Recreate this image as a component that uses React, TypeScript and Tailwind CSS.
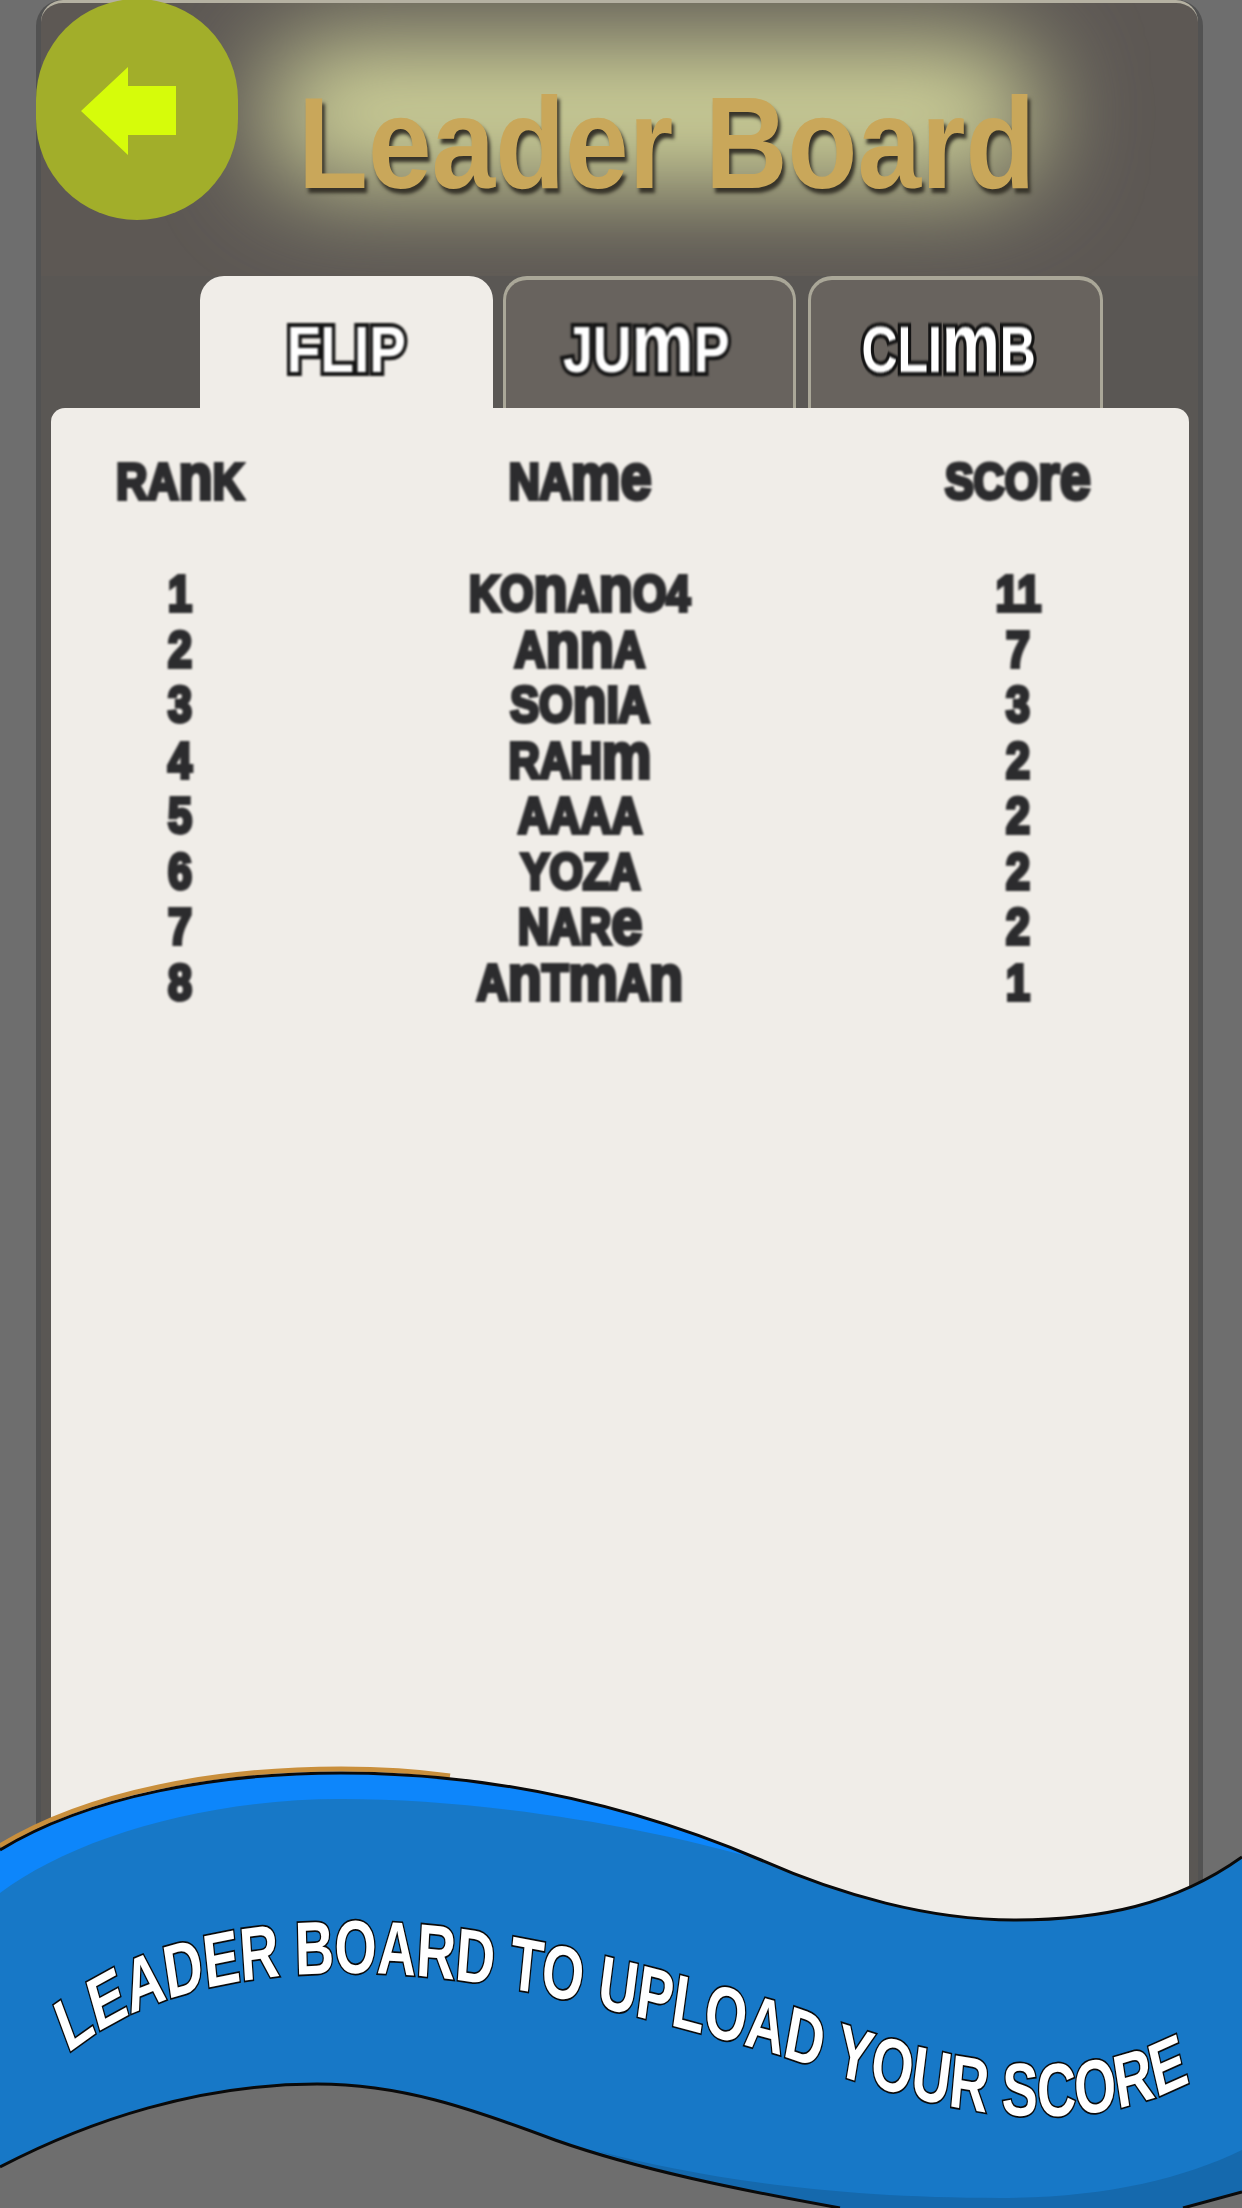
import React from "react";

const rows = [
  ["1", "KOnAnO4", "11"],
  ["2", "AnnA", "7"],
  ["3", "SOnIA", "3"],
  ["4", "RAHm", "2"],
  ["5", "AAAA", "2"],
  ["6", "YOZA", "2"],
  ["7", "NARe", "2"],
  ["8", "AnTmAn", "1"],
];

// the game font is unicase: small letters stand as tall as the capitals
function Unicase({ text }: { text: string }) {
  return (
    <>
      {text.split("").map((c, i) =>
        c >= "a" && c <= "z" ? (
          <span key={i} className="text-[1.3em] leading-[0]">{c}</span>
        ) : (
          <span key={i}>{c}</span>
        )
      )}
    </>
  );
}

function Row({ cells, className }: { cells: string[]; className: string }) {
  return (
    <div className={`grid grid-cols-[258px_542px_334px] items-center text-center ${className}`}>
      {cells.map((c, i) => (
        <div key={i}>
          <span className="inline-block scale-x-[.86] whitespace-nowrap">
            <Unicase text={c} />
          </span>
        </div>
      ))}
    </div>
  );
}

function Tab({ label, active, className, labelClass }: { label: string; active?: boolean; className: string; labelClass: string }) {
  return (
    <div
      className={`flex items-start justify-center h-[132px] rounded-t-[24px] ${className} ${
        active ? "pt-[42px] bg-[#f0ede8]" : "pt-[38px] bg-[#68635e] border-x-[3px] border-t-[4px] border-[#aaa798]"
      }`}
    >
      <span className={`inline-block text-[64px] leading-[64px] font-bold text-white whitespace-nowrap blur-[1px] [-webkit-text-stroke:8px_#141414] [paint-order:stroke_fill] ${labelClass}`}>
        <Unicase text={label} />
      </span>
    </div>
  );
}

function Banner() {
  const top = "M0,1850 C90,1795 220,1773 341,1773 C480,1773 620,1800 761,1860 C840,1895 930,1920 1014,1920 C1100,1920 1175,1905 1242,1857";
  const bottom = "M840,2208 C740,2190 640,2170 555,2140 C470,2108 400,2084 317,2084 C200,2084 90,2120 0,2167";
  return (
    <svg
      viewBox="0 1760 1242 448"
      className="absolute left-0 top-[1760px] w-[1242px] h-[448px]"
    >
      <path d="M0,2167 C90,2120 200,2084 317,2084 C400,2084 470,2108 555,2140 C640,2170 740,2190 840,2208 L0,2208 Z" fill="#6e6e6e" />
      <path d="M1183,2208 L1242,2192 L1242,2208 Z" fill="#6e6e6e" />
      <path d="M0,1846 C90,1791 220,1769 341,1769 C380,1769 415,1771 450,1776" fill="none" stroke="#c98f3c" strokeWidth="5" />
      <path d={`${top} L1242,2192 L1183,2208 L840,2208 C740,2190 640,2170 555,2140 C470,2108 400,2084 317,2084 C200,2084 90,2120 0,2167 Z`} fill="#0d86fb" />
      <path d="M0,1893 C70,1840 200,1799 341,1799 C480,1799 640,1825 761,1860 C840,1895 930,1920 1014,1920 C1100,1920 1175,1905 1242,1857 L1242,2192 L1183,2208 L840,2208 C740,2190 640,2170 555,2140 C470,2108 400,2084 317,2084 C200,2084 90,2120 0,2167 Z" fill="#1778c7" />
      <path d="M594,2150 C700,2178 830,2198 1000,2198 C1100,2198 1180,2180 1242,2150 L1242,2192 L1183,2208 L840,2208 C740,2190 660,2172 594,2150 Z" fill="#1569ad" />
      <path d={top} fill="none" stroke="#0a0a0a" strokeWidth="3" />
      <path d={bottom} fill="none" stroke="#0a0a0a" strokeWidth="3" />
      <path d="M1183,2208 L1242,2192" fill="none" stroke="#0a0a0a" strokeWidth="3" />
      {/* squeezed sideways like the warped lettering, path x is divided by .72 */}
      <g transform="scale(.72,1)">
        <path id="bannerText" d="M94,2054 C194,1995 333,1973 486,1973 C667,1973 833,2005 1083,2055 C1222,2090 1333,2116 1444,2116 C1528,2116 1597,2105 1670,2075" fill="none" />
        <text className="text-[75px] font-bold fill-white stroke-[#0a0a0a] [stroke-width:3.5px] [paint-order:stroke]">
          <textPath href="#bannerText">LEADER BOARD TO UPLOAD YOUR SCORE</textPath>
        </text>
      </g>
    </svg>
  );
}

export default function App() {
  return (
    <div className="relative w-[1242px] h-[2208px] overflow-hidden bg-[#6e6e6e] [font-family:'Liberation_Sans',sans-serif]">
      <div className="flex flex-col ml-[36px] w-[1167px] h-[2208px] border-x-[5px] border-[#525252] rounded-t-[26px] bg-[#5a5754]">
        <div className="relative overflow-hidden h-[276px] pt-[75px] pl-[257px] border-t-[3px] border-[#b5b1a2] rounded-t-[22px] bg-[#5d5854]">
          {/* glow behind the title */}
          <div className="absolute left-[225px] top-[40px] w-[770px] h-[140px] rounded-[60px] bg-[#d4d79c] blur-[52px]" />
          <h1 className="relative w-[846px] origin-left scale-x-[.88] text-[130px] leading-[130px] font-bold text-[#c9a75a] whitespace-nowrap blur-[0.5px] [text-shadow:3px_5px_4px_#37342a]">
            Leader Board
          </h1>
        </div>

        <div className="flex pl-[159px]">
          <Tab label="FLIP" active className="w-[293px]" labelClass="scale-x-[.86]" />
          <Tab label="JUmP" className="w-[293px] ml-[10px]" labelClass="scale-x-[.84] mr-[6px]" />
          <Tab label="CLImB" className="w-[295px] ml-[12px]" labelClass="scale-x-[.78] mr-[14px]" />
        </div>

        <div className="flex-1 ml-[10px] w-[1138px] pt-[37px] rounded-t-[14px] bg-[#f0ede8]">
          <div className="blur-[1px] text-[50px] font-bold text-[#2c2c2e] [-webkit-text-stroke:4px_#2c2c2e]">
            <Row cells={["RAnK", "NAme", "SCOre"]} className="h-[56px] mb-[56px]" />
            {rows.map((r) => (
              <Row key={r[0]} cells={r} className="h-[55.5px]" />
            ))}
          </div>
        </div>
      </div>

      <div className="absolute left-[36px] top-[-1px] flex items-center justify-start w-[202px] h-[221px] rounded-full bg-[#a2ae2a]">
        <svg width="100" height="90" viewBox="0 0 100 90" className="ml-[44px] mb-[-3px] blur-[0.5px]">
          <path d="M1,45 L48,1 L48,20 L96,20 L96,69 L48,69 L48,89 Z" fill="#d6fc0a" />
        </svg>
      </div>

      <Banner />
    </div>
  );
}
